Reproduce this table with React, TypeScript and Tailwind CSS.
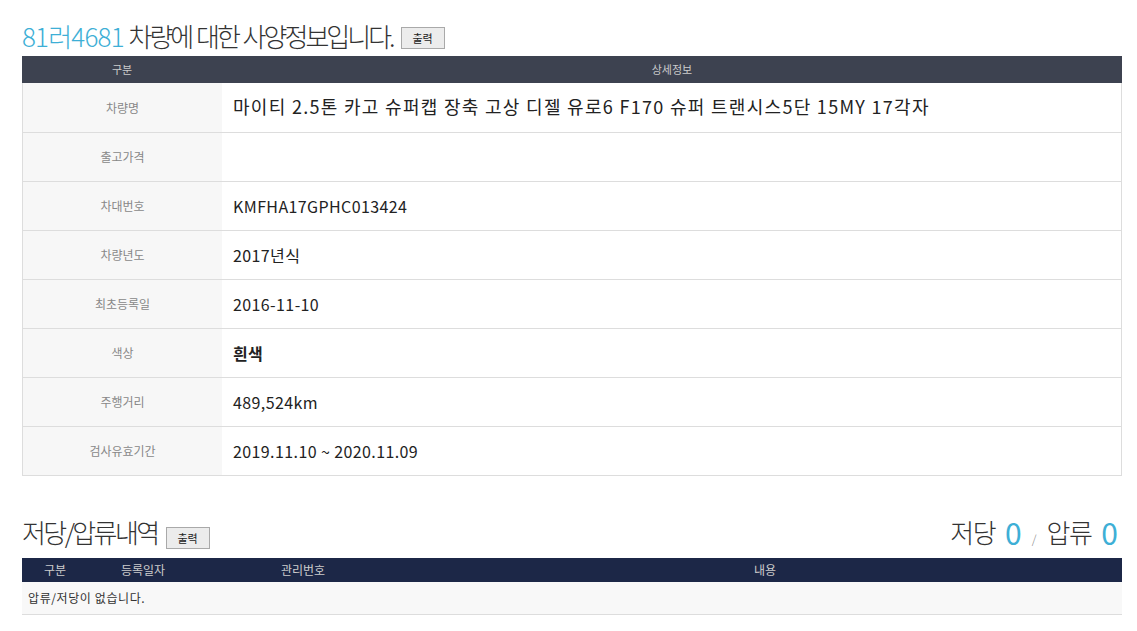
const rows: { label: string; value: string; big?: boolean; bold?: boolean }[] = [
  { label: "차량명", value: "마이티 2.5톤 카고 슈퍼캡 장축 고상 디젤 유로6 F170 슈퍼 트랜시스5단 15MY 17각자", big: true },
  { label: "출고가격", value: "" },
  { label: "차대번호", value: "KMFHA17GPHC013424" },
  { label: "차량년도", value: "2017년식" },
  { label: "최초등록일", value: "2016-11-10" },
  { label: "색상", value: "흰색", bold: true },
  { label: "주행거리", value: "489,524km" },
  { label: "검사유효기간", value: "2019.11.10 ~ 2020.11.09" },
]

function PrintButton() {
  return (
    <button className="h-[22px] w-[44px] border border-[#a9a9a9] bg-[#ececec] text-[11px] text-[#222] leading-none">
      출력
    </button>
  )
}

export default function App() {
  return (
    <div
      className="min-h-screen bg-white px-[22px] text-[#333]"
      style={{ fontFamily: '"Noto Sans CJK KR", "Noto Sans", sans-serif' }}
    >
      <div className="flex items-end gap-[4px] pt-[15px] pb-[7px] h-[56px]">
        <h1 className="text-[26px] font-light leading-none tracking-[-3px] [word-spacing:2px]">
          <span className="text-[#3eafd6] tracking-[-0.8px]">81러4681</span> 차량에 대한 사양정보입니다.
        </h1>
        <div className="ml-[4px]">
          <PrintButton />
        </div>
      </div>

      <div className="w-[1100px] border-b border-[#ddd]">
        <div className="flex h-[27px] items-center bg-[#3d4250] text-[11px] text-[#ccc]">
          <div className="w-[200px] text-center">구분</div>
          <div className="flex-1 text-center">상세정보</div>
        </div>
        {rows.map((r, i) => (
          <div
            key={r.label}
            className={`flex ${i === 0 ? "h-[49px]" : "h-[49px] border-t border-[#ddd]"} border-x border-[#ddd]`}
          >
            <div className="flex w-[199px] items-center justify-center bg-[#f7f7f7] text-[12px] text-[#888]">
              {r.label}
            </div>
            <div
              className={`flex flex-1 items-center pl-[11px] text-[#222] ${
                r.big ? "text-[18px] tracking-[1.3px] pb-[2px]" : "text-[16px] tracking-[0.4px]"
              } ${r.bold ? "font-bold" : ""}`}
            >
              {r.value}
            </div>
          </div>
        ))}
      </div>

      <div className="mt-[38px] flex h-[44px] w-[1100px] items-end justify-between pb-[13px]">
        <div className="flex items-end gap-[8px]">
          <h2 className="text-[26px] font-light leading-none tracking-[-2.6px]">저당/압류내역</h2>
          <div className="mb-[-4px]">
            <PrintButton />
          </div>
        </div>
        <div className="flex items-end text-[26px] font-light leading-none mr-[4px]">
          <span className="tracking-[-1.5px]">저당</span>
          <span className="ml-[10px] text-[30px] leading-[26px] text-[#3eafd6] font-normal">0</span>
          <span className="mx-[10px] text-[12px] text-[#888]">/</span>
          <span className="tracking-[-1.5px]">압류</span>
          <span className="ml-[10px] text-[30px] leading-[26px] text-[#3eafd6] font-normal">0</span>
        </div>
      </div>

      <div className="w-[1100px] border-b border-[#ddd]">
        <div className="flex h-[24px] items-center bg-[#1c2747] text-[12px] text-[#ccc]">
          <div className="w-[66px] text-center">구분</div>
          <div className="w-[110px] text-center">등록일자</div>
          <div className="w-[210px] text-center">관리번호</div>
          <div className="flex-1 text-center">내용</div>
        </div>
        <div className="flex h-[32px] items-center bg-[#f8f8f8] pl-[6px] text-[12px] tracking-[0.6px] text-[#333]">
          압류/저당이 없습니다.
        </div>
      </div>
    </div>
  )
}
